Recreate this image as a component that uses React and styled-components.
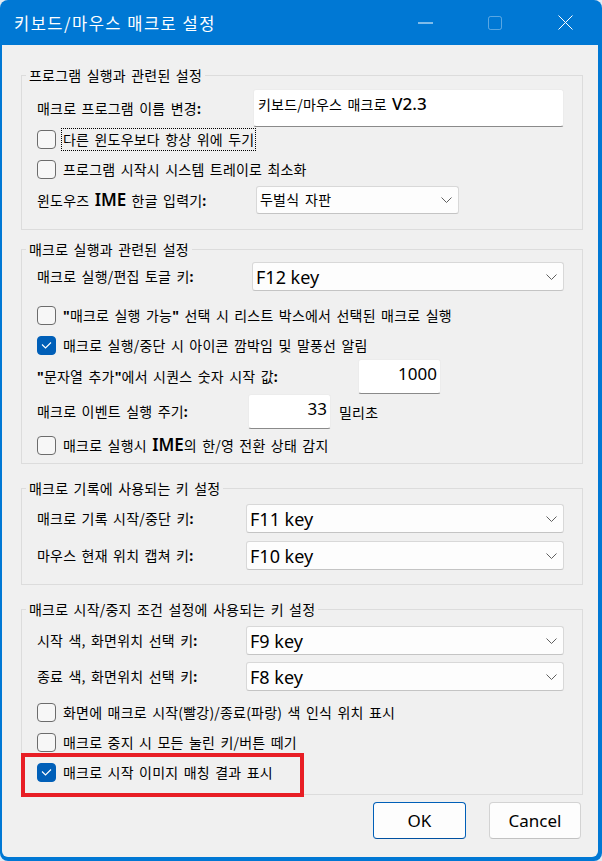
import React from 'react';
import styled, { createGlobalStyle } from 'styled-components';

const GlobalStyle = createGlobalStyle`
  html, body { margin: 0; padding: 0; background: #e4ebf2; }
  body { font-family: "Noto Sans CJK KR", "Noto Sans", sans-serif; }
  * { box-sizing: border-box; }
`;

const Window = styled.div`
  width: 602px;
  height: 861px;
  background: #0078d4;
  border-radius: 8px;
  overflow: hidden;
  display: flex;
  flex-direction: column;
`;

const TitleBar = styled.div`
  height: 45px;
  flex: none;
  display: flex;
  align-items: center;
  padding: 0 2px 0 14px;
  color: #fff;
`;

const Title = styled.div`
  flex: 1;
  font-size: 16.5px;
  letter-spacing: 1.5px;
  line-height: 20px;
  white-space: nowrap;
`;

const CaptionButton = styled.div`
  width: 70px;
  height: 45px;
  flex: none;
  display: flex;
  align-items: center;
  justify-content: center;
`;

const Body = styled.div`
  flex: 1;
  margin: 0 4px 4px 2px;
  background: #f0f0f0;
  border-radius: 0 0 6px 6px;
  display: flex;
  flex-direction: column;
  padding-top: 21px;
  font-size: 14px;
  color: #000;
  word-spacing: 2px;
  letter-spacing: 0.2px;
`;

const Group = styled.fieldset`
  margin: ${(p) => p.$mt}px 15px 0 19px;
  padding: 0;
  border: 1px solid #dcdcdc;
  min-width: 0;
`;

const Legend = styled.legend`
  margin-left: 4px;
  padding: 0 3px;
  line-height: 19px;
  font-size: 14px;
  white-space: nowrap;
`;

const GroupBody = styled.div`
  display: flex;
  flex-direction: column;
  padding: 0 18px ${(p) => p.$pb}px 15px;
`;

const Row = styled.div`
  display: flex;
  align-items: center;
  height: ${(p) => p.$h}px;
  margin-top: ${(p) => p.$mt || 0}px;
`;

const Label = styled.div`
  width: ${(p) => p.$w}px;
  flex: none;
  line-height: 18px;
  white-space: nowrap;
`;

const Latin = styled.span`
  font-family: "Noto Sans", sans-serif;
  font-size: 17px;
  font-weight: ${(p) => p.$weight || 600};
  line-height: 1;
  word-spacing: normal;
  letter-spacing: 0;
`;

const Sym = styled.span`
  font-family: "Noto Sans", sans-serif;
  font-weight: 700;
  font-size: 14px;
`;

const Combo = styled.div`
  ${(p) => (p.$w ? `width: ${p.$w}px; flex: none;` : 'flex: 1;')}
  height: 100%;
  background: #fdfdfd;
  border: 1px solid #d8d8d8;
  border-bottom-color: #c4c4c4;
  border-radius: 3px;
  display: flex;
  align-items: center;
  padding: 0 6px 0 3px;
`;

const ComboValue = styled.span`
  flex: 1;
  font-family: "Noto Sans", "Noto Sans CJK KR", sans-serif;
  font-size: ${(p) => p.$size}px;
  line-height: 1;
  white-space: nowrap;
  word-spacing: ${(p) => (p.$size > 15 ? 'normal' : '2px')};
  letter-spacing: ${(p) => (p.$size > 15 ? '0' : '0.2px')};
`;

const TextBox = styled.div`
  flex: 1;
  height: 100%;
  background: #fff;
  border: 1px solid #ececec;
  border-bottom-color: #8a8a8a;
  border-radius: 3px;
  padding: 5px 4px 0;
  line-height: 18px;
  white-space: nowrap;
`;

const NumBox = styled.div`
  width: 83px;
  flex: none;
  height: 100%;
  background: #fff;
  border: 1px solid #ececec;
  border-bottom-color: #8a8a8a;
  border-radius: 3px;
  display: flex;
  align-items: center;
  justify-content: flex-end;
  padding: 0 3px 6px 0;
  font-family: "Noto Sans", sans-serif;
  font-size: 17px;
  line-height: 1;
  letter-spacing: 0;
`;

const Unit = styled.span`
  margin-left: 8px;
  line-height: 18px;
`;

const CheckRow = styled.div`
  position: relative;
  display: flex;
  align-items: center;
  height: 24px;
  margin-top: ${(p) => p.$mt || 0}px;
`;

const Box = styled.span`
  width: 19px;
  height: 19px;
  flex: none;
  border-radius: 4px;
  border: 1px solid ${(p) => (p.$checked ? '#005fb8' : '#6c6c6c')};
  background: ${(p) => (p.$checked ? '#005fb8' : '#f7f7f7')};
  display: flex;
  align-items: center;
  justify-content: center;
`;

const CheckText = styled.span`
  margin-left: 5px;
  padding: 0 1px;
  border: 1px dotted ${(p) => (p.$focus ? '#000' : 'transparent')};
  line-height: 21px;
  white-space: nowrap;
`;

const Highlight = styled.div`
  position: absolute;
  left: -16px;
  top: -7px;
  width: 283px;
  height: 44px;
  border: 4px solid #e81e25;
  pointer-events: none;
`;

const ButtonRow = styled.div`
  display: flex;
  justify-content: flex-end;
  gap: 23px;
  margin-top: 7px;
  padding-right: 17px;
`;

const Button = styled.div`
  width: ${(p) => p.$w}px;
  height: 37px;
  display: flex;
  align-items: center;
  justify-content: center;
  background: #fdfdfd;
  border: 1px solid ${(p) => (p.$primary ? '#005fb8' : '#d3d3d3')};
  border-bottom-color: ${(p) => (p.$primary ? '#0050a0' : '#c2c2c2')};
  border-radius: 4px;
  font-family: "Noto Sans", sans-serif;
  font-size: 17px;
  word-spacing: normal;
  letter-spacing: 0;
`;

const Chevron = () => (
  <svg width="11" height="6" viewBox="0 0 11 6" style={{ flex: 'none' }}>
    <polyline points="0.5,0.5 5.5,5.5 10.5,0.5" fill="none" stroke="#5f5f5f" strokeWidth="1" />
  </svg>
);

const CheckMark = () => (
  <svg width="11" height="8" viewBox="0 0 11 8">
    <polyline points="1,3.5 4.5,7 10,1.5" fill="none" stroke="#fff" strokeWidth="1.1" />
  </svg>
);

const Check = ({ checked, focus, mt, highlight, children }) => (
  <CheckRow $mt={mt}>
    <Box $checked={checked}>{checked && <CheckMark />}</Box>
    <CheckText $focus={focus}>{children}</CheckText>
    {highlight && <Highlight />}
  </CheckRow>
);

const KeyRow = ({ label, value, mt, w = 209 }) => (
  <Row $h={29} $mt={mt}>
    <Label $w={w}>{label}</Label>
    <Combo>
      <ComboValue $size={18}>{value}</ComboValue>
      <Chevron />
    </Combo>
  </Row>
);

export default function App() {
  return (
    <>
      <GlobalStyle />
      <Window>
        <TitleBar>
          <Title>키보드/마우스 매크로 설정</Title>
          <CaptionButton>
            <svg width="15" height="2" viewBox="0 0 15 2">
              <line x1="0" y1="1" x2="15" y2="1" stroke="#fff" strokeWidth="1" />
            </svg>
          </CaptionButton>
          <CaptionButton>
            <svg width="14" height="14" viewBox="0 0 14 14">
              <rect x="0.5" y="0.5" width="13" height="13" rx="2" fill="none" stroke="rgba(255,255,255,0.35)" strokeWidth="1" />
            </svg>
          </CaptionButton>
          <CaptionButton>
            <svg width="15" height="15" viewBox="0 0 15 15">
              <path d="M0.5 0.5 L14.5 14.5 M14.5 0.5 L0.5 14.5" stroke="#fff" strokeWidth="1" fill="none" />
            </svg>
          </CaptionButton>
        </TitleBar>
        <Body>
          <Group $mt={0}>
            <Legend>프로그램 실행과 관련된 설정</Legend>
            <GroupBody $pb={15}>
              <Row $h={38} $mt={4}>
                <Label $w={216}>매크로 프로그램 이름 변경<Sym>:</Sym></Label>
                <TextBox>키보드/마우스 매크로 <Latin $weight={500}>V2.3</Latin></TextBox>
              </Row>
              <Check focus>다른 윈도우보다 항상 위에 두기</Check>
              <Check mt={6}>프로그램 시작시 시스템 트레이로 최소화</Check>
              <Row $h={28} $mt={5}>
                <Label $w={219}>윈도우즈 <Latin>IME</Latin> 한글 입력기<Sym>:</Sym></Label>
                <Combo $w={203}>
                  <ComboValue $size={14}>두벌식 자판</ComboValue>
                  <Chevron />
                </Combo>
              </Row>
            </GroupBody>
          </Group>

          <Group $mt={10}>
            <Legend>매크로 실행과 관련된 설정</Legend>
            <GroupBody $pb={6}>
              <KeyRow label={<>매크로 실행/편집 토글 키<Sym>:</Sym></>} value="F12 key" mt={3} w={215} />
              <Check mt={12}><Sym>"</Sym>매크로 실행 가능<Sym>"</Sym> 선택 시 리스트 박스에서 선택된 매크로 실행</Check>
              <Check mt={6} checked>매크로 실행/중단 시 아이콘 깜박임 및 말풍선 알림</Check>
              <Row $h={35} $mt={2}>
                <Label $w={321}><Sym>"</Sym>문자열 추가<Sym>"</Sym>에서 시퀀스 숫자 시작 값<Sym>:</Sym></Label>
                <NumBox>1000</NumBox>
              </Row>
              <Row $h={35}>
                <Label $w={211}>매크로 이벤트 실행 주기<Sym>:</Sym></Label>
                <NumBox>33</NumBox>
                <Unit>밀리초</Unit>
              </Row>
              <Check mt={4}>매크로 실행시 <Latin>IME</Latin>의 한/영 전환 상태 감지</Check>
            </GroupBody>
          </Group>

          <Group $mt={15}>
            <Legend>매크로 기록에 사용되는 키 설정</Legend>
            <GroupBody $pb={14}>
              <KeyRow label={<>매크로 기록 시작/중단 키<Sym>:</Sym></>} value="F11 key" mt={6} />
              <KeyRow label={<>마우스 현재 위치 캡쳐 키<Sym>:</Sym></>} value="F10 key" mt={8} />
            </GroupBody>
          </Group>

          <Group $mt={15}>
            <Legend>매크로 시작/중지 조건 설정에 사용되는 키 설정</Legend>
            <GroupBody $pb={10}>
              <KeyRow label={<>시작 색, 화면위치 선택 키<Sym>:</Sym></>} value="F9 key" mt={7} />
              <KeyRow label={<>종료 색, 화면위치 선택 키<Sym>:</Sym></>} value="F8 key" mt={7} />
              <Check mt={9}>화면에 매크로 시작(빨강)/종료(파랑) 색 인식 위치 표시</Check>
              <Check mt={6}>매크로 중지 시 모든 눌린 키/버튼 떼기</Check>
              <Check mt={6} checked highlight>매크로 시작 이미지 매칭 결과 표시</Check>
            </GroupBody>
          </Group>

          <ButtonRow>
            <Button $w={93} $primary>OK</Button>
            <Button $w={92}>Cancel</Button>
          </ButtonRow>
        </Body>
      </Window>
    </>
  );
}
